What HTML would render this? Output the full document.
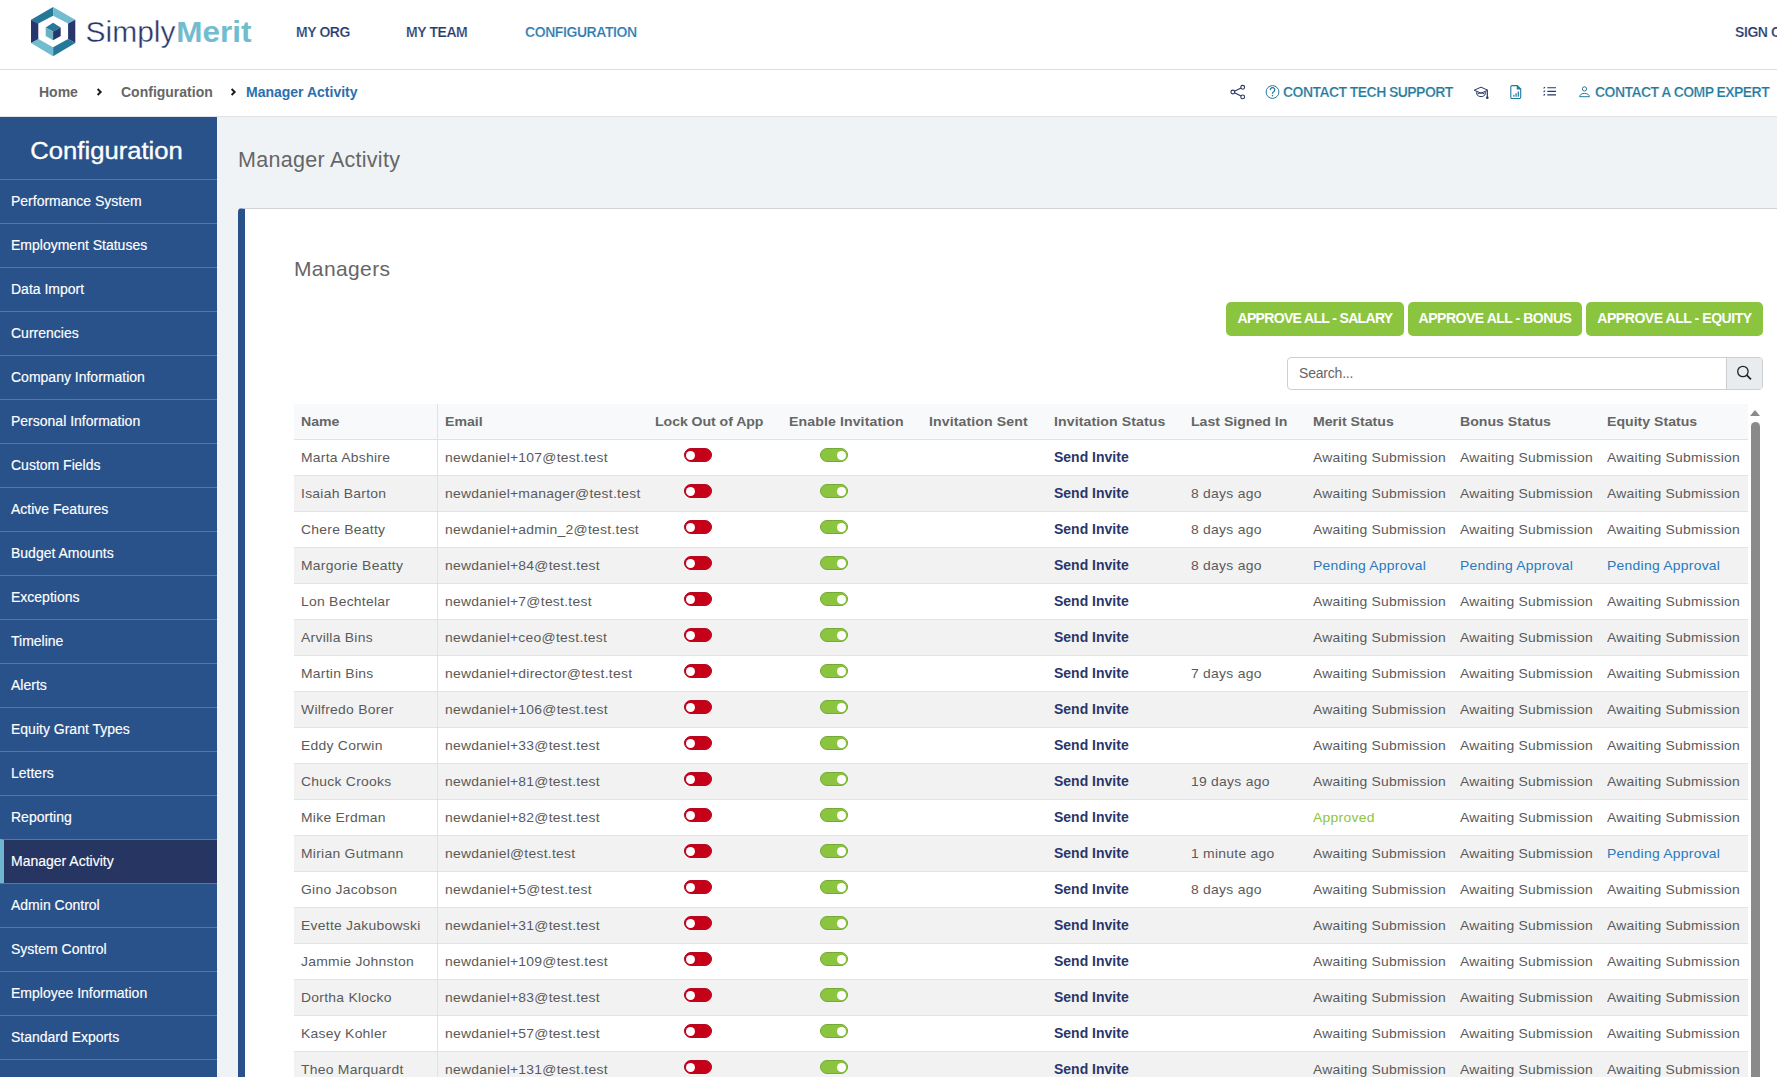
<!DOCTYPE html>
<html><head><meta charset="utf-8"><title>Manager Activity</title>
<style>
*{box-sizing:border-box;margin:0;padding:0}
html,body{width:1777px;height:1077px;overflow:hidden;background:#f0f3f6;font-family:"Liberation Sans",sans-serif;color:#5a5a5a}
.abs{position:absolute}
#hdr{position:absolute;left:0;top:0;width:1777px;height:70px;background:#fff;border-bottom:1px solid #dcdde3}
#bc{position:absolute;left:0;top:70px;width:1777px;height:47px;background:#fff;border-bottom:1px solid #dfe2e6}
.nav{-webkit-text-stroke:.22px #fff;position:absolute;top:24px;letter-spacing:-0.42px;font-size:14px;font-weight:bold;color:#27366b;white-space:nowrap;line-height:16px}
.nav.on{color:#2a7ab0}
.bci{position:absolute;top:84px;font-size:14px;font-weight:bold;color:#666;white-space:nowrap;line-height:16px}
.bci.on{color:#2a6fae}
.tl{-webkit-text-stroke:.22px #fff;position:absolute;top:84px;letter-spacing:-0.56px;font-size:14px;font-weight:bold;color:#1f7a9e;white-space:nowrap;line-height:16px}
#side{position:absolute;left:0;top:117px;width:217px;height:960px;background:#2a528a;overflow:hidden}
#side h2{height:62px;line-height:67px;text-align:center;color:#fff;font-size:24.4px;font-weight:normal;margin-left:-3px;-webkit-text-stroke:.35px #fff}
#side h2 span{display:inline-block;transform:scaleX(1.05)}
.si{height:44px;border-top:1px solid #5875a3;color:#fff;font-size:14px;line-height:43px;-webkit-text-stroke:.15px #fff;padding-left:11px;white-space:nowrap}
.si span{display:inline-block;transform:translateY(.3px)}
.si.act{background:#273562;border-left:4px solid #6fb7cf;padding-left:7px}
#ttl{position:absolute;left:238px;top:147px;font-size:21.5px;letter-spacing:.28px;color:#666;line-height:26px;white-space:nowrap}
#panel{position:absolute;left:238px;top:208px;width:1600px;height:900px;background:#fff;border-left:7px solid #2a528a;border-top:1px solid #d2d3d5;border-top-left-radius:4px}
#mg{position:absolute;left:294px;top:256px;letter-spacing:.38px;font-size:21px;color:#666;line-height:26px}
.btn{position:absolute;top:302px;height:34px;letter-spacing:-.66px;background:#8bc53f;border-radius:5px;color:#fff;font-weight:bold;font-size:14px;line-height:32px;text-align:center;white-space:nowrap}
#srch{position:absolute;left:1287px;top:357px;width:476px;height:33px;border:1px solid #ccd0d5;border-radius:4px;background:#fff}
#srch span{position:absolute;left:11px;top:6.5px;letter-spacing:-.2px;font-size:14px;color:#666;line-height:16px}
#srch b{position:absolute;right:0;top:0;width:36px;height:31px;background:#e9ecef;border-left:1px solid #ccd0d5;border-radius:0 3px 3px 0}
#tbl{position:absolute;left:294px;top:404px;width:1454px}
.th{position:relative;height:36px;background:#f8f9fa;border-bottom:1px solid #dfe2e6;font-weight:bold;font-size:14px;color:#666}
.tr{position:relative;height:36px;border-bottom:1px solid #dfe2e6;font-size:13.3px;letter-spacing:.25px;color:#5a5a5a}
.tr .c{transform:scaleX(1.046);transform-origin:0 50%}
.tr.alt{background:#f2f2f2}
.c,.h{position:absolute;top:9px;line-height:16px;white-space:nowrap}
.tr .c{top:10px}
.th .h{top:10px;font-size:13.5px;transform:scaleX(1.045);transform-origin:0 50%}
.th .c4,.th .c5,.th .c6{margin-left:1px;letter-spacing:.1px}.th .c3{letter-spacing:-.05px}
.c1{left:7px}.c2{left:151px}.c3{left:361px}.c4{left:494px}.c5{left:634px}.c6{left:759px}.c7{left:897px}.c8{left:1018.8px}.c9{left:1165.8px}.c10{left:1312.8px}
.tr .c6{top:9px;font-weight:bold;color:#27366b;letter-spacing:0;font-size:14px;margin-left:1px;transform:none}
.vl{position:absolute;left:143px;top:0;width:1px;height:700px;background:#dfe2e6}
.st.p{color:#2a78be}.st.v{color:#8bc53f}
.tg{position:absolute;top:8px;width:28px;height:14px;border-radius:7px}
.tg:after{content:"";position:absolute;top:1.5px;width:9px;height:9px;border-radius:5px;background:#fff}
.tg.r{left:390px;background:#c60019;border:1px solid #b3081f}.tg.r:after{left:1.3px}
.tg.g{left:526px;background:#8bc53f;border:1px solid #74aa35}.tg.g:after{right:1.3px}
#sb{position:absolute;left:1751px;top:422px;width:9px;height:700px;background:#8a8a8a;border-radius:5px}
#sbu{position:absolute;left:1750px;top:410px;width:0;height:0;border-left:5px solid transparent;border-right:5px solid transparent;border-bottom:6px solid #8a8a8a}
</style></head><body>
<div id="hdr">
<svg class="abs" style="left:28px;top:4px" width="52" height="56" viewBox="28 4 52 56">
<polygon points="53.1,7.1 31,19.7 38.3,23.6 53.1,15.8" fill="#25789a"/>
<polygon points="53.1,7.1 75.3,19.7 68.1,23.6 53.1,15.8" fill="#72bccf"/>
<polygon points="75.3,19.7 75.3,42.9 68.1,38.9 68.1,23.6" fill="#27366b"/>
<polygon points="75.3,42.9 53.1,56.3 53.1,47.3 68.1,38.9" fill="#25789a"/>
<polygon points="53.1,56.3 31,42.9 38.3,38.9 53.1,47.3" fill="#72bccf"/>
<polygon points="31,42.9 31,19.7 38.3,23.6 38.3,38.9" fill="#27366b"/>
<polygon points="53.1,22.8 60.7,27.6 53.1,31.5 45.7,27.6" fill="#25789a"/>
<polygon points="45.7,27.6 53.1,31.5 53.1,40.2 45.7,35.9" fill="#6ab0c0"/>
<polygon points="60.7,27.6 53.1,31.5 53.1,40.2 60.7,35.9" fill="#27366b"/>
</svg>
<div class="abs" id="logo" style="left:85.5px;top:12.6px;font-size:30px;line-height:36px;white-space:nowrap;color:#27366b"><span id="lg1" style="-webkit-text-stroke:.4px #fff">Simply</span><b id="lg2" style="color:#72bccf;font-size:31.5px;letter-spacing:0;margin-left:.8px;display:inline-block;transform:translateY(-.3px) scaleY(.93);transform-origin:0 77%">Merit</b></div>
<span class="nav" style="left:296px">MY ORG</span>
<span class="nav" style="left:406px">MY TEAM</span>
<span class="nav on" style="left:525px">CONFIGURATION</span>
<span class="nav" style="left:1735px">SIGN OUT</span>
</div>
<div id="bc"></div>
<span class="bci" style="left:39px">Home</span>
<span class="bci" style="left:121px">Configuration</span>
<span class="bci on" style="left:246px">Manager Activity</span>
<span class="tl" id="t1" style="left:1283px">CONTACT TECH SUPPORT</span>
<span class="tl" id="t2" style="left:1595px">CONTACT A COMP EXPERT</span>

<svg class="abs" style="left:1220px;top:76px" width="80" height="32" viewBox="0 0 80 32" fill="none">
<g stroke="#27366b" stroke-width="1.1"><circle cx="12.8" cy="16" r="1.9"/><circle cx="22.7" cy="11.3" r="1.9"/><circle cx="22.7" cy="20.9" r="1.9"/><path d="M14.5 15.2L21 12.1M14.5 16.8L21 20.1"/></g>
<circle cx="52.5" cy="16" r="6.4" stroke="#1f7a9e" stroke-width="1"/>
<path d="M50.3 13.9a2.2 2.2 0 1 1 3.3 1.9c-.8.5-1.1.9-1.1 1.9" stroke="#1f7a9e" stroke-width="1.3"/><circle cx="52.5" cy="19.6" r=".8" fill="#1f7a9e"/>
</svg>
<svg class="abs" style="left:1465px;top:76px" width="140" height="32" viewBox="0 0 140 32" fill="none">
<g stroke="#27366b" stroke-width="1"><path d="M16 11.2L9.2 14.2L16 17.2L22.8 14.2Z"/><path d="M11.8 15.6v3c1.2 1.4 2.6 2 4.2 2s3-.6 4.200-2v-3"/><path d="M12.500 18.200c1.100-.9 2.200-1.300 3.500-1.300s2.400.4 3.500 1.300"/><path d="M22.300 14.400v6.600" stroke-width="1.200"/></g><circle cx="22.300" cy="21.800" r="1.300" fill="#27366b"/>
<g stroke="#1f7a9e" stroke-width="1.1"><path d="M47 9.600h5.300l3.400 3.400v8.300a1.200 1.200 0 0 1-1.200 1.200h-7.500a1.200 1.200 0 0 1-1.200-1.200v-10.500a1.200 1.200 0 0 1 1.200-1.200z"/><path d="M52.300 9.600v3.400h3.400" fill="#1f7a9e"/></g>
<path d="M48.300 18.800h1.200v2h-1.200zM50.500 17.200h1.200v3.600h-1.200zM52.700 15.400h1.200v5.400h-1.200z" fill="#1f7a9e"/>
<g stroke="#27366b" stroke-width="1.100"><path d="M82.300 11.800h8.700M82.300 15.400h8.700M82.300 18.900h8.700"/><path d="M78.600 12.400l1.400-1.300M78.600 16l1.400-1.300M78.600 19.500l1.400-1.300"/></g>
<g stroke="#1f7a9e" stroke-width="1"><circle cx="119.500" cy="12.900" r="2.100"/><path d="M114.600 20.700c.2-2.100 2.200-3.300 4.900-3.300s4.700 1.200 4.900 3.300z"/></g>
</svg>
<svg class="abs" style="left:92px;top:84px" width="150" height="16" viewBox="0 0 150 16" fill="none" stroke="#1a1a1a" stroke-width="1.900"><path d="M5.600 5l3.100 3l-3.100 3M139.600 5l3.100 3l-3.100 3"/></svg>
<div id="side"><h2><span>Configuration</span></h2>
<div class="si"><span>Performance System</span></div>
<div class="si"><span>Employment Statuses</span></div>
<div class="si"><span>Data Import</span></div>
<div class="si"><span>Currencies</span></div>
<div class="si"><span>Company Information</span></div>
<div class="si"><span>Personal Information</span></div>
<div class="si"><span>Custom Fields</span></div>
<div class="si"><span>Active Features</span></div>
<div class="si"><span>Budget Amounts</span></div>
<div class="si"><span>Exceptions</span></div>
<div class="si"><span>Timeline</span></div>
<div class="si"><span>Alerts</span></div>
<div class="si"><span>Equity Grant Types</span></div>
<div class="si"><span>Letters</span></div>
<div class="si"><span>Reporting</span></div>
<div class="si act"><span>Manager Activity</span></div>
<div class="si"><span>Admin Control</span></div>
<div class="si"><span>System Control</span></div>
<div class="si"><span>Employee Information</span></div>
<div class="si"><span>Standard Exports</span></div>
<div class="si"><span>&nbsp;</span></div>
</div>
<div id="ttl">Manager Activity</div>
<div id="panel"></div>
<div id="mg">Managers</div>
<div class="btn" style="left:1226px;width:178px">APPROVE ALL - SALARY</div>
<div class="btn" style="left:1408px;width:174px;letter-spacing:-.47px">APPROVE ALL - BONUS</div>
<div class="btn" style="left:1586px;width:177px;letter-spacing:-.45px">APPROVE ALL - EQUITY</div>
<div id="srch"><span>Search...</span><b></b></div>
<svg class="abs" style="left:1727px;top:358px" width="36" height="31" viewBox="1727 358 36 31" fill="none" stroke="#222" stroke-width="1.300"><circle cx="1742.900" cy="371.500" r="5.200"/><path d="M1746.700 375.200L1751 379.300" stroke-width="1.700"/></svg>
<div id="tbl">
<div class="th"><span class="h c1">Name</span><span class="h c2">Email</span><span class="h c3">Lock Out of App</span><span class="h c4">Enable Invitation</span><span class="h c5">Invitation Sent</span><span class="h c6">Invitation Status</span><span class="h c7">Last Signed In</span><span class="h c8">Merit Status</span><span class="h c9">Bonus Status</span><span class="h c10">Equity Status</span></div>
<div class="tr"><span class="c c1">Marta Abshire</span><span class="c c2">newdaniel+107@test.test</span><i class="tg r"></i><i class="tg g"></i><span class="c c6">Send Invite</span><span class="c c7"></span><span class="c c8"><span class="st">Awaiting Submission</span></span><span class="c c9"><span class="st">Awaiting Submission</span></span><span class="c c10"><span class="st">Awaiting Submission</span></span></div>
<div class="tr alt"><span class="c c1">Isaiah Barton</span><span class="c c2">newdaniel+manager@test.test</span><i class="tg r"></i><i class="tg g"></i><span class="c c6">Send Invite</span><span class="c c7">8 days ago</span><span class="c c8"><span class="st">Awaiting Submission</span></span><span class="c c9"><span class="st">Awaiting Submission</span></span><span class="c c10"><span class="st">Awaiting Submission</span></span></div>
<div class="tr"><span class="c c1">Chere Beatty</span><span class="c c2">newdaniel+admin_2@test.test</span><i class="tg r"></i><i class="tg g"></i><span class="c c6">Send Invite</span><span class="c c7">8 days ago</span><span class="c c8"><span class="st">Awaiting Submission</span></span><span class="c c9"><span class="st">Awaiting Submission</span></span><span class="c c10"><span class="st">Awaiting Submission</span></span></div>
<div class="tr alt"><span class="c c1">Margorie Beatty</span><span class="c c2">newdaniel+84@test.test</span><i class="tg r"></i><i class="tg g"></i><span class="c c6">Send Invite</span><span class="c c7">8 days ago</span><span class="c c8"><span class="st p">Pending Approval</span></span><span class="c c9"><span class="st p">Pending Approval</span></span><span class="c c10"><span class="st p">Pending Approval</span></span></div>
<div class="tr"><span class="c c1">Lon Bechtelar</span><span class="c c2">newdaniel+7@test.test</span><i class="tg r"></i><i class="tg g"></i><span class="c c6">Send Invite</span><span class="c c7"></span><span class="c c8"><span class="st">Awaiting Submission</span></span><span class="c c9"><span class="st">Awaiting Submission</span></span><span class="c c10"><span class="st">Awaiting Submission</span></span></div>
<div class="tr alt"><span class="c c1">Arvilla Bins</span><span class="c c2">newdaniel+ceo@test.test</span><i class="tg r"></i><i class="tg g"></i><span class="c c6">Send Invite</span><span class="c c7"></span><span class="c c8"><span class="st">Awaiting Submission</span></span><span class="c c9"><span class="st">Awaiting Submission</span></span><span class="c c10"><span class="st">Awaiting Submission</span></span></div>
<div class="tr"><span class="c c1">Martin Bins</span><span class="c c2">newdaniel+director@test.test</span><i class="tg r"></i><i class="tg g"></i><span class="c c6">Send Invite</span><span class="c c7">7 days ago</span><span class="c c8"><span class="st">Awaiting Submission</span></span><span class="c c9"><span class="st">Awaiting Submission</span></span><span class="c c10"><span class="st">Awaiting Submission</span></span></div>
<div class="tr alt"><span class="c c1">Wilfredo Borer</span><span class="c c2">newdaniel+106@test.test</span><i class="tg r"></i><i class="tg g"></i><span class="c c6">Send Invite</span><span class="c c7"></span><span class="c c8"><span class="st">Awaiting Submission</span></span><span class="c c9"><span class="st">Awaiting Submission</span></span><span class="c c10"><span class="st">Awaiting Submission</span></span></div>
<div class="tr"><span class="c c1">Eddy Corwin</span><span class="c c2">newdaniel+33@test.test</span><i class="tg r"></i><i class="tg g"></i><span class="c c6">Send Invite</span><span class="c c7"></span><span class="c c8"><span class="st">Awaiting Submission</span></span><span class="c c9"><span class="st">Awaiting Submission</span></span><span class="c c10"><span class="st">Awaiting Submission</span></span></div>
<div class="tr alt"><span class="c c1">Chuck Crooks</span><span class="c c2">newdaniel+81@test.test</span><i class="tg r"></i><i class="tg g"></i><span class="c c6">Send Invite</span><span class="c c7">19 days ago</span><span class="c c8"><span class="st">Awaiting Submission</span></span><span class="c c9"><span class="st">Awaiting Submission</span></span><span class="c c10"><span class="st">Awaiting Submission</span></span></div>
<div class="tr"><span class="c c1">Mike Erdman</span><span class="c c2">newdaniel+82@test.test</span><i class="tg r"></i><i class="tg g"></i><span class="c c6">Send Invite</span><span class="c c7"></span><span class="c c8"><span class="st v">Approved</span></span><span class="c c9"><span class="st">Awaiting Submission</span></span><span class="c c10"><span class="st">Awaiting Submission</span></span></div>
<div class="tr alt"><span class="c c1">Mirian Gutmann</span><span class="c c2">newdaniel@test.test</span><i class="tg r"></i><i class="tg g"></i><span class="c c6">Send Invite</span><span class="c c7">1 minute ago</span><span class="c c8"><span class="st">Awaiting Submission</span></span><span class="c c9"><span class="st">Awaiting Submission</span></span><span class="c c10"><span class="st p">Pending Approval</span></span></div>
<div class="tr"><span class="c c1">Gino Jacobson</span><span class="c c2">newdaniel+5@test.test</span><i class="tg r"></i><i class="tg g"></i><span class="c c6">Send Invite</span><span class="c c7">8 days ago</span><span class="c c8"><span class="st">Awaiting Submission</span></span><span class="c c9"><span class="st">Awaiting Submission</span></span><span class="c c10"><span class="st">Awaiting Submission</span></span></div>
<div class="tr alt"><span class="c c1">Evette Jakubowski</span><span class="c c2">newdaniel+31@test.test</span><i class="tg r"></i><i class="tg g"></i><span class="c c6">Send Invite</span><span class="c c7"></span><span class="c c8"><span class="st">Awaiting Submission</span></span><span class="c c9"><span class="st">Awaiting Submission</span></span><span class="c c10"><span class="st">Awaiting Submission</span></span></div>
<div class="tr"><span class="c c1">Jammie Johnston</span><span class="c c2">newdaniel+109@test.test</span><i class="tg r"></i><i class="tg g"></i><span class="c c6">Send Invite</span><span class="c c7"></span><span class="c c8"><span class="st">Awaiting Submission</span></span><span class="c c9"><span class="st">Awaiting Submission</span></span><span class="c c10"><span class="st">Awaiting Submission</span></span></div>
<div class="tr alt"><span class="c c1">Dortha Klocko</span><span class="c c2">newdaniel+83@test.test</span><i class="tg r"></i><i class="tg g"></i><span class="c c6">Send Invite</span><span class="c c7"></span><span class="c c8"><span class="st">Awaiting Submission</span></span><span class="c c9"><span class="st">Awaiting Submission</span></span><span class="c c10"><span class="st">Awaiting Submission</span></span></div>
<div class="tr"><span class="c c1">Kasey Kohler</span><span class="c c2">newdaniel+57@test.test</span><i class="tg r"></i><i class="tg g"></i><span class="c c6">Send Invite</span><span class="c c7"></span><span class="c c8"><span class="st">Awaiting Submission</span></span><span class="c c9"><span class="st">Awaiting Submission</span></span><span class="c c10"><span class="st">Awaiting Submission</span></span></div>
<div class="tr alt"><span class="c c1">Theo Marquardt</span><span class="c c2">newdaniel+131@test.test</span><i class="tg r"></i><i class="tg g"></i><span class="c c6">Send Invite</span><span class="c c7"></span><span class="c c8"><span class="st">Awaiting Submission</span></span><span class="c c9"><span class="st">Awaiting Submission</span></span><span class="c c10"><span class="st">Awaiting Submission</span></span></div>
<div class="vl"></div>
</div>
<div id="sbu"></div><div id="sb"></div>
</body></html>
